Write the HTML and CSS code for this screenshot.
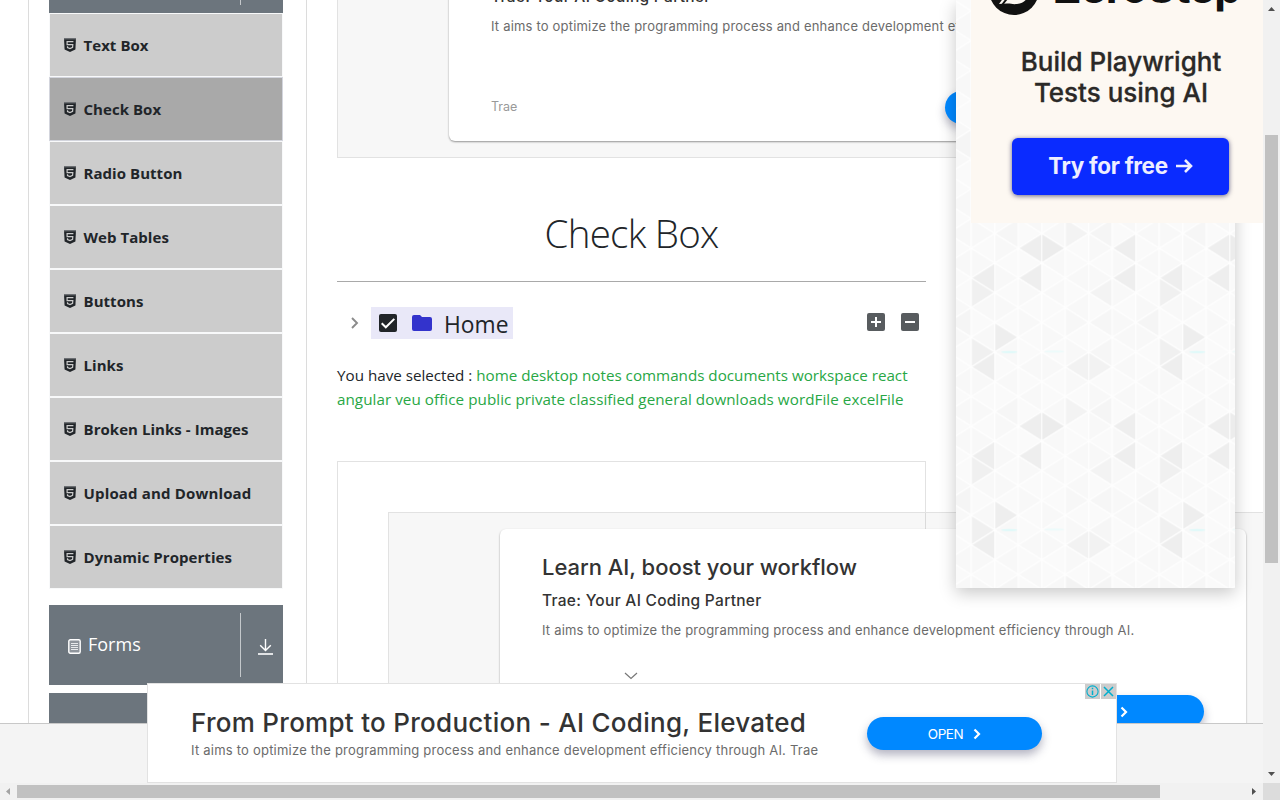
FILE: index.html
```html
<!DOCTYPE html>
<html lang="en">
<head>
<meta charset="utf-8">
<title>Check Box</title>
<link rel="stylesheet" href="styles.css">
</head>
<body>
<svg width="0" height="0" class="defs" aria-hidden="true">
  <symbol id="html5" viewBox="0 0 12 14"><path d="M0 0h12l-.6 11.400L6 14 .6 11.400z" fill="#212529"/><path d="M0 0h12v1.400H0z" fill="#6c6f73"/><path d="M9.400 3.600H3.100v3.100h5.700l-.2 2.700L6 10.500l-2.500-1V8.300" fill="none" stroke="#ccc" stroke-width="1.200"/></symbol>
  <symbol id="chev" viewBox="0 0 8 12"><path d="M1.500 1.500 6 6l-4.500 4.500" fill="none" stroke="currentColor" stroke-width="2.200"/></symbol>
</svg>
<div class="window">
  <div class="viewport">
    <div class="layout">
      <aside class="sidebar">
        <div class="group-head cut"><i class="divider"></i></div>
        <ul class="menu">
          <li><svg><use href="#html5"/></svg><span>Text Box</span></li>
          <li class="active"><svg><use href="#html5"/></svg><span>Check Box</span></li>
          <li><svg><use href="#html5"/></svg><span>Radio Button</span></li>
          <li><svg><use href="#html5"/></svg><span>Web Tables</span></li>
          <li><svg><use href="#html5"/></svg><span>Buttons</span></li>
          <li><svg><use href="#html5"/></svg><span>Links</span></li>
          <li><svg><use href="#html5"/></svg><span>Broken Links - Images</span></li>
          <li><svg><use href="#html5"/></svg><span class="loose">Upload and Download</span></li>
          <li><svg><use href="#html5"/></svg><span>Dynamic Properties</span></li>
        </ul>
        <div class="group-head">
          <svg class="form-icon" viewBox="0 0 13 15"><rect x=".8" y=".8" width="11.400" height="13.400" rx="1.500" fill="#8f959c" stroke="#fff" stroke-width="1.400"/><path d="M3 4.500h7M3 6.500h7M3 8.500h7M3 10.500h7" stroke="#e8eaec" stroke-width="1"/></svg>
          <span class="group-name">Forms</span>
          <i class="divider"></i>
          <svg class="down" viewBox="0 0 15 16"><path d="M7.500 0v11M2.200 6.200l5.300 5.300 5.300-5.300" fill="none" stroke="#fff" stroke-width="1.400"/><path d="M0 15h15" stroke="#fff" stroke-width="1.600"/></svg>
        </div>
        <div class="group-head next"></div>
      </aside>
      <main class="content">
        <div class="ad first">
          <div class="card">
            <div class="ad-title"></div>
            <div class="ad-sub">Trae: Your AI Coding Partner</div>
            <div class="ad-desc">It aims to optimize the programming process and enhance development efficiency through AI.</div>
            <div class="ad-foot"><span>Trae</span><span class="pill wide"></span></div>
          </div>
        </div>
        <h1>Check Box</h1>
        <div class="tree">
          <svg class="toggle" viewBox="0 0 8 12"><path d="M1 1l5 5-5 5" fill="none" stroke="#8b8b8b" stroke-width="1.900"/></svg>
          <span class="node">
            <svg class="check" viewBox="0 0 18 18"><rect width="18" height="18" rx="2" fill="#212529"/><path d="M2.700 9.300l4.100 4 8.500-8.400" fill="none" stroke="#fff" stroke-width="2"/></svg>
            <svg class="folder" viewBox="0 0 20 16"><path d="M2 0h6l2 2h8a2 2 0 0 1 2 2v10a2 2 0 0 1-2 2H2a2 2 0 0 1-2-2V2a2 2 0 0 1 2-2z" fill="#33c"/></svg>
            <span class="home">Home</span>
          </span>
          <span class="tools">
            <svg viewBox="0 0 18 18"><rect width="18" height="18" rx="2" fill="#585c5f"/><path d="M4 9h10M9 4v10" stroke="#fff" stroke-width="2"/></svg>
            <svg viewBox="0 0 18 18"><rect width="18" height="18" rx="2" fill="#585c5f"/><path d="M4 9h10" stroke="#fff" stroke-width="2"/></svg>
          </span>
        </div>
        <p class="result">You have selected : <b>home desktop notes commands documents workspace react</b><br><b class="second">angular veu office public private classified general downloads wordFile excelFile</b></p>
        <div class="slot">
          <div class="ad">
            <div class="card">
              <div class="ad-title">Learn AI, boost your workflow</div>
              <div class="ad-sub">Trae: Your AI Coding Partner</div>
              <div class="ad-desc">It aims to optimize the programming process and enhance development efficiency through AI.</div>
              <div class="ad-foot"><span class="pill wide"><svg><use href="#chev"/></svg></span></div>
            </div>
          </div>
        </div>
      </main>
    </div>

    <div class="side-ad">
      <svg class="tri" width="279" height="588">
        <defs>
          <pattern id="tp" patternUnits="userSpaceOnUse" x="15.300" y="337.300" width="188" height="178">
            <rect width="188" height="178" fill="#fafafa"/>
            <g id="tris"></g>
          </pattern>
        </defs>
        <rect width="279" height="588" fill="url(#tp)"/>
      </svg>
      <div class="zero">
        <svg class="zero-logo" viewBox="0 0 50 50"><circle cx="25" cy="25" r="25" fill="#111"/><path d="M10 39 20 25h20c0 8-4 13-12 14-5 .6-7-1-10-.500z" fill="#fdf8f2"/><path d="M13 40 24 26" stroke="#111" stroke-width="2"/></svg>
        <div class="zero-name">ZeroStep</div>
        <div class="zero-text">Build Playwright<br>Tests using AI</div>
        <div class="zero-btn"><span>Try for free</span><svg viewBox="0 0 17 14"><path d="M0 7h15M9 1l6 6-6 6" fill="none" stroke="#eef" stroke-width="2.600"/></svg></div>
      </div>
    </div>

    <div class="dock"></div>
    <svg class="collapse" viewBox="0 0 14 8"><path d="M1 1l6 5.500L13 1" fill="none" stroke="#777" stroke-width="1.200"/></svg>
    <div class="banner">
      <div class="banner-copy">
        <div class="banner-title">From Prompt to Production - AI Coding, Elevated</div>
        <div class="banner-desc">It aims to optimize the programming process and enhance development efficiency through AI. Trae</div>
      </div>
      <span class="pill">OPEN <svg><use href="#chev"/></svg></span>
      <div class="choices">
        <svg viewBox="0 0 15 15"><circle cx="7.500" cy="7.500" r="5.600" fill="none" stroke="#00aecd" stroke-width="1.100"/><path d="M7.500 6.500v4.500M7.500 3.700v1.500" stroke="#00aecd" stroke-width="1.500"/></svg>
        <svg viewBox="0 0 15 15"><path d="M3 3l9 9M12 3l-9 9" stroke="#00aecd" stroke-width="1.500"/></svg>
      </div>
    </div>
  </div>
  <div class="vbar"><svg viewBox="0 0 7 4"><path d="M0 4 3.500 0 7 4z" fill="#505050"/></svg><i></i><svg class="end" viewBox="0 0 7 4"><path d="M0 0h7L3.500 4z" fill="#505050"/></svg></div>
  <div class="hbar"><svg viewBox="0 0 4 7"><path d="M4 0v7L0 3.500z" fill="#a3a3a3"/></svg><i></i><svg class="end" viewBox="0 0 4 7"><path d="M0 0v7l4-3.500z" fill="#505050"/></svg></div>
  <div class="corner"></div>
</div>
<script src="pattern.js"></script>
</body>
</html>
```

FILE: pattern.js
```js
// Fills the triangle lattice of the side panel background.
const W = 23.5, H = 178 / 12;
const shades = {
  R1_0: '#eeeeee', R0_1: '#f0f0f0', L0_2: '#eeeeee', L4_2: '#f2f2f2', R5_2: '#f2f2f2',
  L5_1: '#f6f6f6', L2_6: '#eeeeee', R3_6: '#ececec', L6_6: '#eeeeee', R4_5: '#f3f3f3',
  L5_5: '#f5f5f5', L1_5: '#f6f6f6', L0_8: '#eeeeee', R0_9: '#f0f0f0', L2_8: '#eeeeee',
  L6_8: '#eeeeee', L5_9: '#f3f3f3', L5_11: '#f6f6f6', L7_11: '#f5f5f5', R4_11: '#f7f7f7'
};
let out = '';
for (let c = -1; c < 9; c++) {
  for (let u = -1; u < 14; u++) {
    const col = (c + 8) % 8, row = (u + 12) % 12;
    const right = (col + row) % 2 === 1;
    const key = (right ? 'R' : 'L') + col + '_' + row;
    const fill = shades[key] || ((col * 5 + row * 3) % 7 < 3 ? '#f8f8f8' : '#fafafa');
    const x = c * W, y = u * H;
    const pts = right
      ? [[x, y - H], [x + W, y], [x, y + H]]
      : [[x + W, y - H], [x, y], [x + W, y + H]];
    out += `<polygon points="${pts.join(' ')}" fill="${fill}" stroke="#fff" stroke-width="1.100"/>`;
  }
}
out += '<ellipse cx="38" cy="14.800" rx="8" ry="1" fill="#dcfafa"/><ellipse cx="83" cy="14.300" rx="10" ry="1" fill="#ecfbfb"/>';
document.getElementById('tris').innerHTML = out;
```

FILE: styles.css
```css
* { box-sizing: border-box; }
body { margin: 0; background: #fff; color: #212529; font-family: "Noto Sans", "Open Sans", sans-serif; overflow: hidden; }
.defs { display: block; position: absolute; }
svg { flex: none; display: block; }
.window { display: grid; grid-template: 783px 17px / 1263px 17px; width: 1280px; height: 800px; }
.viewport { position: relative; overflow: hidden; }
.layout { display: flex; height: 723px; overflow: hidden; padding-left: 28px; }

.sidebar { width: 279px; flex: none; height: 723px; padding: 0 23px 0 20px; border: solid #dcdcdc; border-width: 0 1px; }
.menu { list-style: none; margin: 0 0 16px; padding: 0; }
.menu li { display: flex; align-items: center; gap: 7.500px; height: 64px; padding-left: 14px; border: 1px solid #f8f9fa; background: #ccc; font-family: "Open Sans", sans-serif; font-size: 15px; font-weight: 700; letter-spacing: .05px; }
.menu .loose { letter-spacing: .16px; }
.menu li.active { background: #a9a9a9; border-color: #d3d5dd; }
.menu svg { width: 12px; height: 14px; }
.group-head { display: flex; align-items: center; height: 80px; background: #6c757d; color: #fff; padding-left: 19px; margin-bottom: 8px; }
.group-head.cut { height: 13px; margin: 0; padding-left: 192px; align-items: flex-start; }
.group-head.cut .divider { height: 5px; }
.form-icon { width: 13px; height: 15px; margin-top: 3px; }
.group-name { width: 152px; margin: -3px 0 0 8px; padding-right: 1px; font-family: "Open Sans", sans-serif; font-size: 18px; text-indent: -1px; }
.divider { width: 1px; height: 64px; background: #c4c8cb; margin-left: -1px; }
.down { width: 15px; height: 16px; margin: 3px 0 0 17px; }

.content { width: 589px; flex: none; margin-left: 30px; }
.ad { width: 970px; height: 250px; padding: 16px 0 0 111px; border: 1px solid #e2e2e2; background: rgba(0,0,0,.03); font-family: Inter, sans-serif; }
.ad.first { margin-top: -92px; }
.card { width: 746px; height: 216px; padding: 23px 42px 0; border-radius: 6px; background: #fff; box-shadow: 0 1px 2px rgba(0,0,0,.4); white-space: nowrap; }
.ad-title { height: 30px; font-size: 22px; line-height: 30px; font-weight: 500; letter-spacing: -.03px; color: #333; }
.ad-sub { margin-top: 7px; font-size: 15.500px; line-height: 24px; font-weight: 500; letter-spacing: .29px; color: #333; }
.ad-desc { margin-top: 7px; font-size: 13px; line-height: 20px; letter-spacing: .19px; color: #6b6b6b; }
.ad-foot { display: flex; justify-content: space-between; margin-top: 55px; font-size: 12.500px; line-height: 31px; color: #999; }
.pill { display: flex; align-items: center; justify-content: center; gap: 10px; width: 175px; height: 33px; border-radius: 17px; background: #0088ff; color: #fff; font-family: Inter, sans-serif; font-size: 13.500px; line-height: 30px; letter-spacing: -.45px; box-shadow: 0 5px 10px rgba(40,40,80,.35); }
.pill.wide { width: 208px; margin-left: auto; padding-left: 48px; }
.pill svg { width: 8px; height: 12px; }
h1 { margin: 0; height: 124px; padding-top: 47px; border-bottom: 1px solid #a9a9a9; text-align: center; font-family: "Open Sans", sans-serif; font-size: 38.500px; line-height: 56px; font-weight: 300; letter-spacing: -.75px; }
.tree { display: flex; align-items: center; height: 32px; margin-top: 25px; }
.toggle { width: 8px; height: 12px; margin-left: 14px; }
.node { display: flex; align-items: center; width: 142px; height: 32px; margin-left: 12px; padding-left: 8px; background: #e9e8f8; }
.check { width: 18px; height: 18px; }
.folder { width: 20px; height: 16px; margin-left: 15px; }
.home { margin: 4px 0 0 12px; font-family: "Open Sans", sans-serif; font-size: 22.800px; line-height: 32px; }
.tools { display: flex; gap: 16px; margin: -2px 7px 0 auto; }
.tools svg { width: 18px; height: 18px; }
.result { margin: 24px 0 0; height: 98px; font-family: "Open Sans", sans-serif; font-size: 15.200px; line-height: 24px; white-space: nowrap; }
.result b { font-weight: 400; color: #28a745; }
.result .second { letter-spacing: .06px; }
.slot { height: 400px; padding: 50px; border: 1px solid #e2e2e2; }

.side-ad { position: absolute; left: 956px; top: 0; width: 279px; height: 588px; box-shadow: 0 5px 16px rgba(0,0,0,.22); }
.zero { position: absolute; left: 15px; top: 0; width: 293px; height: 223px; overflow: hidden; background: #fdf8f2; font-family: Inter, sans-serif; color: #2b2927; }
.zero-logo { position: absolute; left: 18px; top: -35px; width: 50px; height: 50px; }
.zero-name { position: absolute; left: 82px; top: -43px; font-size: 43px; line-height: 60px; font-weight: 700; letter-spacing: -.7px; color: #111; }
.zero-text { padding-top: 46px; font-size: 26px; line-height: 31px; font-weight: 500; text-align: center; padding-left: 7px; -webkit-text-stroke: .3px #2b2927; }
.zero-btn { display: flex; align-items: center; justify-content: center; gap: 8px; width: 217px; height: 57px; margin: 30px 0 0 41px; padding-bottom: 2px; border-radius: 6px; background: #0a2bff; box-shadow: 0 1px 5px rgba(0,0,60,.6); color: #eef; font-size: 22.500px; font-weight: 700; letter-spacing: -.3px; }
.zero-btn svg { width: 17px; height: 14px; }

.dock { position: absolute; left: 0; top: 723px; width: 1263px; height: 60px; background: #f4f4f4; border-top: 1px solid #c8c8c8; }
.collapse { position: absolute; left: 623.500px; top: 672px; width: 14px; height: 8px; }
.banner { position: absolute; left: 147px; top: 683px; width: 970px; height: 100px; display: flex; padding-left: 43px; background: #fff; border: 1px solid #e2e2e2; font-family: Inter, sans-serif; white-space: nowrap; }
.banner-copy { width: 676px; padding-top: 21px; }
.banner-title { font-size: 26px; line-height: 36px; font-weight: 500; letter-spacing: .28px; color: #333; }
.banner-desc { margin-top: -1px; font-size: 13px; line-height: 20px; letter-spacing: .22px; color: #6b6b6b; }
.banner .pill { margin-top: 33px; }
.choices { position: absolute; right: 0; top: 0; display: flex; gap: 1px; }
.choices svg { width: 15px; height: 15px; background: #ccc; }

.vbar { display: flex; flex-direction: column; align-items: center; background: #f1f1f1; padding: 7px 0; }
.vbar svg { width: 7px; height: 4px; }
.vbar i { width: 13px; height: 428px; margin-top: 124px; background: #c1c1c1; }
.vbar .end { margin-top: auto; }
.hbar { display: flex; align-items: center; background: #f1f1f1; padding: 0 7px 0 6px; }
.hbar svg { width: 4px; height: 7px; }
.hbar i { width: 1143px; height: 13px; margin-left: 7px; background: #c1c1c1; }
.hbar .end { margin-left: auto; }
.corner { background: #dcdcdc; }
```
